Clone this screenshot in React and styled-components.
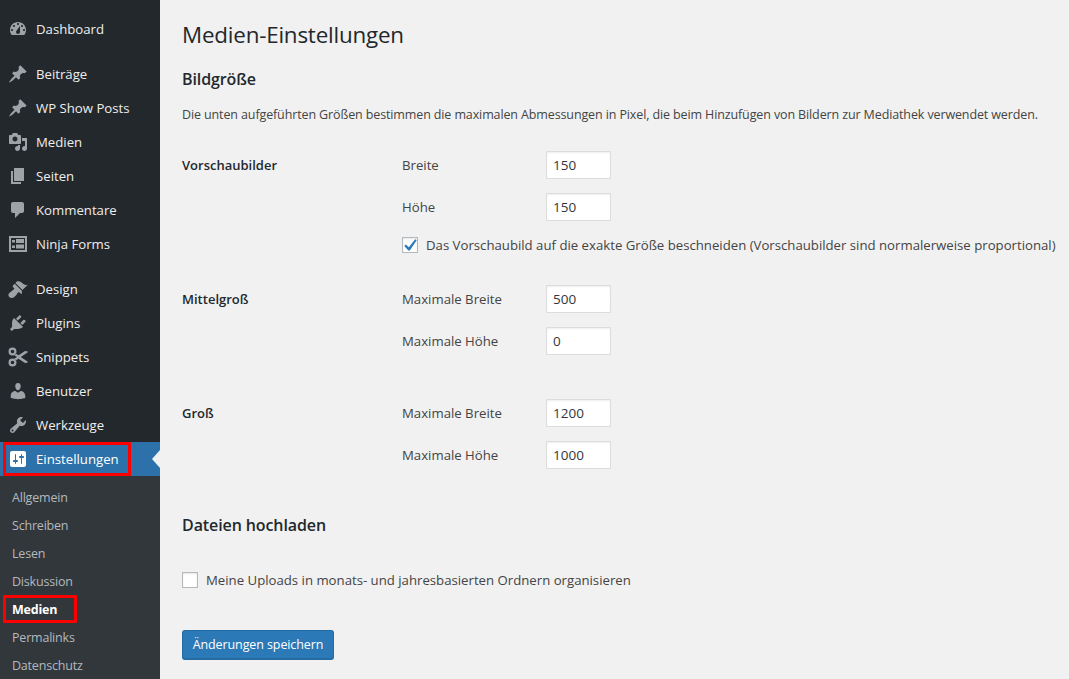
import React from 'react';
import styled, { createGlobalStyle } from 'styled-components';

const GlobalStyle = createGlobalStyle`
  html, body {
    margin: 0;
    padding: 0;
    height: 100%;
    overflow: hidden;
    background: #f1f1f1;
  }
  * {
    box-sizing: border-box;
  }
`;

const font = `"Open Sans", "Noto Sans", sans-serif`;

const Page = styled.div`
  display: flex;
  height: 679px;
  font-family: ${font};
  font-size: 13.2px;
  color: #444;
`;

const Sidebar = styled.nav`
  width: 160px;
  flex: none;
  display: flex;
  flex-direction: column;
  padding-top: 12px;
  background: #23282d;
`;

const MenuItem = styled.div`
  position: relative;
  display: flex;
  align-items: center;
  flex: none;
  height: 34px;
  margin-top: ${(p) => (p.$separated ? '11px' : '0')};
  padding-left: 8px;
  gap: 8px;
  font-size: 13.2px;
  color: ${(p) => (p.$current ? '#fff' : '#eee')};
  background: ${(p) => (p.$current ? '#2c71a9' : 'transparent')};
`;

const MenuIcon = styled.svg`
  width: 20px;
  height: 20px;
  flex: none;
  fill: ${(p) => (p.$current ? '#fff' : '#9ea3a8')};
`;

const CurrentArrow = styled.span`
  position: absolute;
  right: 0;
  top: 8px;
  border-style: solid;
  border-width: 9px 8px 9px 0;
  border-color: transparent #f1f1f1 transparent transparent;
`;

const Highlight = styled.span`
  position: absolute;
  left: 3px;
  top: 0;
  width: ${(p) => p.$width}px;
  height: ${(p) => p.$height}px;
  border: 3px solid #f00;
  border-radius: 1px;
`;

const SubMenu = styled.div`
  flex: 1;
  display: flex;
  flex-direction: column;
  padding-top: 7px;
  background: #32373c;
`;

const SubItem = styled.div`
  position: relative;
  display: flex;
  align-items: center;
  flex: none;
  height: 28px;
  padding-left: 12px;
  font-size: 12.5px;
  letter-spacing: -0.2px;
  font-weight: ${(p) => (p.$current ? 700 : 400)};
  color: ${(p) => (p.$current ? '#fff' : '#b4b9be')};
`;

const Main = styled.main`
  flex: 1;
  min-width: 0;
  padding: 20px 0 0 22px;
  white-space: nowrap;
`;

const Title = styled.h1`
  margin: 0;
  font-size: 22.4px;
  font-weight: 400;
  line-height: 30px;
  letter-spacing: -0.2px;
  color: #23282d;
`;

const SectionTitle = styled.h2`
  margin: ${(p) => p.$top}px 0 0;
  font-size: 16px;
  font-weight: 600;
  line-height: 22px;
  letter-spacing: -0.1px;
  color: #23282d;
`;

const Intro = styled.p`
  margin: 15px 0 26px;
  font-size: 12.5px;
  letter-spacing: -0.12px;
  line-height: 20px;
`;

const SettingRow = styled.div`
  display: grid;
  grid-template-columns: 220px 1fr;
  margin-bottom: ${(p) => p.$gap}px;
`;

const RowName = styled.div`
  font-size: 13px;
  font-weight: 600;
  line-height: 28px;
  color: #23282d;
`;

const Fields = styled.div`
  display: flex;
  flex-direction: column;
  gap: 14px;
`;

const Field = styled.label`
  display: grid;
  grid-template-columns: 144px 65px;
  align-items: center;
`;

const SizeInput = styled.input`
  width: 65px;
  height: 28px;
  padding: 0 6px;
  border: 1px solid #ddd;
  background: #fff;
  box-shadow: inset 0 1px 2px rgba(0, 0, 0, 0.07);
  font: inherit;
  font-size: 13.5px;
  color: #32373c;
  outline: none;
`;

const CheckLabel = styled.label`
  display: flex;
  align-items: center;
  gap: 8px;
  height: 20px;
`;

const CheckBox = styled.span`
  display: flex;
  align-items: center;
  justify-content: center;
  width: 16px;
  height: 16px;
  flex: none;
  border: 1px solid #b4b9be;
  background: #fff;
  box-shadow: inset 0 1px 2px rgba(0, 0, 0, 0.1);
`;

const CheckMark = styled.svg`
  width: 16px;
  height: 16px;
  flex: none;
  fill: #2c7ab8;
`;

const UploadRow = styled.div`
  margin: 34px 0 40px;
`;

const SaveButton = styled.button`
  display: block;
  width: 152px;
  height: 30px;
  padding: 0;
  border: 1px solid #236ba3;
  border-bottom-width: 2px;
  border-radius: 3px;
  background: #2b79b6;
  font: inherit;
  font-size: 12.5px;
  letter-spacing: -0.1px;
  color: #fff;
`;

const ICONS = {
  dashboard:
    'M3.76 16h12.48c1.1-1.37 1.76-3.11 1.76-5 0-4.42-3.58-8-8-8s-8 3.58-8 8c0 1.89.66 3.63 1.76 5zM10 4c.55 0 1 .45 1 1s-.45 1-1 1-1-.45-1-1 .45-1 1-1zM6 6c.55 0 1 .45 1 1s-.45 1-1 1-1-.45-1-1 .45-1 1-1zm8 0c.55 0 1 .45 1 1s-.45 1-1 1-1-.45-1-1 .45-1 1-1zm-5.37 5.55L12 7v6c0 1.1-.9 2-2 2s-2-.9-2-2c0-.57.24-1.08.63-1.45zM4 10c.55 0 1 .45 1 1s-.45 1-1 1-1-.45-1-1 .45-1 1-1zm12 0c.55 0 1 .45 1 1s-.45 1-1 1-1-.45-1-1 .45-1 1-1z',
  post:
    'M10.44 3.02l1.82-1.82 6.36 6.35-1.83 1.82c-1.05-.68-2.48-.57-3.41.36l-.75.75c-.92.93-1.04 2.35-.35 3.41l-1.83 1.82-2.41-2.41-2.8 2.79c-.42.42-3.38 2.71-3.8 2.29s1.86-3.39 2.28-3.81l2.79-2.79L4.1 9.36l1.83-1.82c1.05.69 2.48.57 3.4-.36l.75-.75c.93-.92 1.05-2.35.36-3.41z',
  media:
    'M13 11V4c0-.55-.45-1-1-1h-1.67L9 1H5L3.67 3H2c-.55 0-1 .45-1 1v7c0 .55.45 1 1 1h10c.55 0 1-.45 1-1zM7 4.5c1.38 0 2.5 1.12 2.5 2.5S8.38 9.5 7 9.5 4.5 8.38 4.5 7 5.62 4.5 7 4.5zM14 6h5v10.5c0 1.38-1.12 2.5-2.5 2.5S14 17.88 14 16.5s1.12-2.5 2.5-2.5c.17 0 .34.02.5.05V9h-3V6zm-4 8.05V13h2v3.5c0 1.38-1.12 2.5-2.5 2.5S7 17.88 7 16.5 8.12 14 9.5 14c.17 0 .34.02.5.05z',
  page: 'M6 15V2h10v13H6zm-1 1h8v2H3V5h2v11z',
  comments:
    'M5 2h9c1.1 0 2 .9 2 2v7c0 1.1-.9 2-2 2h-2l-5 5v-5H5c-1.1 0-2-.9-2-2V4c0-1.1.9-2 2-2z',
  forms:
    'M1 2h18v16H1V2zm2 2v12h14V4H3zm1 2h3v2.500H4V6zm0 5.500h3V14H4v-2.500zM8 5h8v4H8V5zm0 5.500h8v4H8v-4z',
  design:
    'M14.48 11.06L7.41 3.99l1.5-1.5c.5-.56 2.3-.47 3.51.32 1.21.8 1.43 1.28 2.91 2.1 1.18.64 2.45 1.26 4.45.85zm-.71.71L6.7 4.7 4.93 6.47c-.39.39-.39 1.02 0 1.41l1.06 1.06c.39.39.39 1.03 0 1.42-.6.6-1.43 1.11-2.21 1.69-.35.26-.7.53-1.01.84C1.43 13.23.4 14.91.4 15.91c0 1.54 1.8 3.11 3.18 3.11 1 0 2.68-1.03 4.02-2.37.31-.31.58-.66.84-1.01.58-.78 1.09-1.61 1.69-2.21.39-.39 1.03-.39 1.42 0l1.06 1.06c.39.39 1.02.39 1.41 0z',
  plugins:
    'M13.11 4.36L9.87 7.6 8 5.73l3.24-3.24c.35-.34 1.05-.2 1.56.32.52.51.66 1.21.31 1.55zm-8 1.77l.91-1.12 9.01 9.01-1.19.84c-.71.71-2.63 1.16-3.82 1.16H6.14L4.9 17.26c-.59.59-1.54.59-2.12 0-.59-.58-.59-1.53 0-2.12l1.24-1.24v-3.88c0-1.13.4-3.19 1.09-3.89zm7.26 3.97l3.24-3.24c.34-.35 1.04-.21 1.55.31.52.51.66 1.21.31 1.55l-3.24 3.25z',
  snippets:
    'M4.500.500a4 4 0 1 1 0 8 4 4 0 0 1 0-8zm0 2.200a1.800 1.800 0 1 0 0 3.600 1.800 1.800 0 0 0 0-3.600zM4.500 11.500a4 4 0 1 1 0 8 4 4 0 0 1 0-8zm0 2.200a1.800 1.800 0 1 0 0 3.600 1.800 1.800 0 0 0 0-3.600zM7.500 6.500l3 1.800L17 4l3 .500-.500 1-6.700 4.500 6.700 4.500.500 1-3 .500-6.500-4.300-3 1.800-1-2L9 10 6.500 8.500z',
  users:
    'M10 9.25c-2.27 0-2.73-3.44-2.73-3.44C7 4.02 7.82 2 9.97 2c2.16 0 2.98 2.02 2.71 3.81 0 0-.41 3.44-2.68 3.44zm0 2.57L12.72 10c2.39 0 4.52 2.33 4.52 4.53v2.49s-3.65 1.13-7.24 1.13c-3.65 0-7.24-1.13-7.24-1.13v-2.49c0-2.25 1.94-4.48 4.47-4.48z',
  tools:
    'M16.68 9.77c-1.34 1.34-3.3 1.67-4.95.99l-5.41 6.52c-.99.99-2.59.99-3.58 0s-.99-2.59 0-3.57l6.52-5.42c-.68-1.65-.35-3.61.99-4.95 1.28-1.28 3.12-1.62 4.72-1.06l-2.89 2.89 2.82 2.82 2.86-2.87c.53 1.58.18 3.39-1.08 4.65zM3.81 16.21c.4.39 1.04.39 1.43 0 .4-.4.4-1.04 0-1.43-.39-.4-1.03-.4-1.43 0-.39.39-.39 1.03 0 1.43z',
  settings:
    'M18 16V4c0-1.1-.9-2-2-2H4c-1.1 0-2 .9-2 2v12c0 1.1.9 2 2 2h12c1.1 0 2-.9 2-2zM8 11h1c.55 0 1 .45 1 1s-.45 1-1 1H8v1.5c0 .28-.22.5-.5.5s-.5-.22-.5-.5V13H6c-.55 0-1-.45-1-1s.45-1 1-1h1V5.500c0-.28.22-.5.5-.5s.5.22.5.5V11zm5-2h-1c-.55 0-1-.45-1-1s.45-1 1-1h1V5.500c0-.28.22-.5.5-.5s.5.22.5.5V7h1c.55 0 1 .45 1 1s-.45 1-1 1h-1v5.500c0 .28-.22.5-.5.5s-.5-.22-.5-.5V9z',
};

const MENU = [
  { label: 'Dashboard', icon: 'dashboard' },
  { label: 'Beiträge', icon: 'post', separated: true },
  { label: 'WP Show Posts', icon: 'post' },
  { label: 'Medien', icon: 'media' },
  { label: 'Seiten', icon: 'page' },
  { label: 'Kommentare', icon: 'comments' },
  { label: 'Ninja Forms', icon: 'forms' },
  { label: 'Design', icon: 'design', separated: true },
  { label: 'Plugins', icon: 'plugins' },
  { label: 'Snippets', icon: 'snippets' },
  { label: 'Benutzer', icon: 'users' },
  { label: 'Werkzeuge', icon: 'tools' },
];

const SUBMENU = ['Allgemein', 'Schreiben', 'Lesen', 'Diskussion', 'Medien', 'Permalinks', 'Datenschutz'];

const Icon = ({ name, current }) => (
  <MenuIcon viewBox="0 0 20 20" $current={current}>
    <path fillRule="evenodd" d={ICONS[name]} />
  </MenuIcon>
);

const SizeField = ({ label, value }) => (
  <Field>
    <span>{label}</span>
    <SizeInput type="text" defaultValue={value} />
  </Field>
);

const Check = ({ checked, children }) => (
  <CheckLabel>
    <CheckBox>
      {checked && (
        <CheckMark viewBox="0 0 16 16">
          <path d="M13.2 2.2l1.5 1.1-6.900 10.200H6.300L2.300 9.100l1.500-1.500 3 2.700z" />
        </CheckMark>
      )}
    </CheckBox>
    {children}
  </CheckLabel>
);

export default function App() {
  return (
    <Page>
      <GlobalStyle />
      <Sidebar>
        {MENU.map((item) => (
          <MenuItem key={item.label} $separated={item.separated}>
            <Icon name={item.icon} />
            <span>{item.label}</span>
          </MenuItem>
        ))}
        <MenuItem $current>
          <Icon name="settings" current />
          <span>Einstellungen</span>
          <CurrentArrow />
          <Highlight $width={128} $height={34} />
        </MenuItem>
        <SubMenu>
          {SUBMENU.map((label) => (
            <SubItem key={label} $current={label === 'Medien'}>
              {label}
              {label === 'Medien' && <Highlight $width={74} $height={28} />}
            </SubItem>
          ))}
        </SubMenu>
      </Sidebar>
      <Main>
        <Title>Medien-Einstellungen</Title>
        <SectionTitle $top={18}>Bildgröße</SectionTitle>
        <Intro>
          Die unten aufgeführten Größen bestimmen die maximalen Abmessungen in Pixel, die beim Hinzufügen von Bildern
          zur Mediathek verwendet werden.
        </Intro>
        <SettingRow $gap={30}>
          <RowName>Vorschaubilder</RowName>
          <Fields>
            <SizeField label="Breite" value="150" />
            <SizeField label="Höhe" value="150" />
            <Check checked>
              Das Vorschaubild auf die exakte Größe beschneiden (Vorschaubilder sind normalerweise proportional)
            </Check>
          </Fields>
        </SettingRow>
        <SettingRow $gap={44}>
          <RowName>Mittelgroß</RowName>
          <Fields>
            <SizeField label="Maximale Breite" value="500" />
            <SizeField label="Maximale Höhe" value="0" />
          </Fields>
        </SettingRow>
        <SettingRow $gap={0}>
          <RowName>Groß</RowName>
          <Fields>
            <SizeField label="Maximale Breite" value="1200" />
            <SizeField label="Maximale Höhe" value="1000" />
          </Fields>
        </SettingRow>
        <SectionTitle $top={45}>Dateien hochladen</SectionTitle>
        <UploadRow>
          <Check>Meine Uploads in monats- und jahresbasierten Ordnern organisieren</Check>
        </UploadRow>
        <SaveButton type="button">Änderungen speichern</SaveButton>
      </Main>
    </Page>
  );
}
